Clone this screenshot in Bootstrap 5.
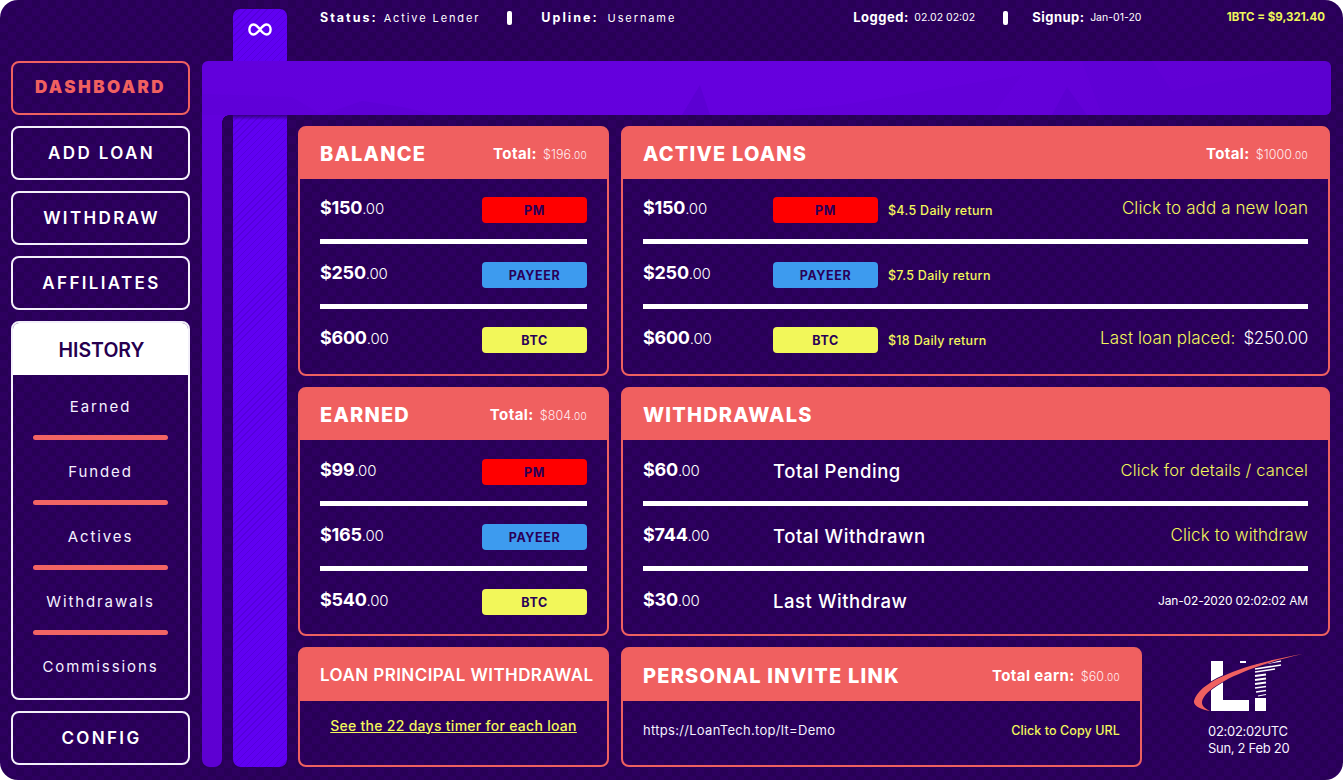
<!DOCTYPE html>
<html lang="en">
<head>
<meta charset="utf-8">
<title>LoanTech Dashboard</title>
<link rel="stylesheet" href="https://cdn.jsdelivr.net/npm/bootstrap@5.3.0/dist/css/bootstrap.min.css">
<style>
html,body{margin:0;background:#fff;overflow:hidden}
body{font-family:Inter,"Noto Sans",sans-serif;color:#fff}
.lt-shell{width:1343px;height:780px;border-radius:18px;overflow:hidden;display:grid;grid-template-columns:179px 1129px;column-gap:12px;grid-template-rows:61px 706px;padding-left:11px;
 background:conic-gradient(#2d005f 25%,#280056 0 50%,#2d005f 0 75%,#280056 0) 0 0/16px 16px}
/* header */
.lt-top{grid-column:2;grid-row:1;display:flex;padding-left:31px;position:relative}
.lt-tab{width:54px;height:52px;margin-top:9px;border-radius:7px 7px 0 0;flex:none;display:flex;justify-content:center;padding-top:14px}
.lt-tab svg{width:24px;height:13px;display:block}
.lt-stripe{background:repeating-linear-gradient(135deg,#6000f2 0 4px,#5600dc 4px 5px)}
.lt-info{display:flex;align-items:center;height:18px;margin-top:9px;font-size:11px;white-space:nowrap}
.lt-sp b{font-size:12.5px;font-weight:700;letter-spacing:2px;margin-right:6px}
.lt-sp span{letter-spacing:1.9px}
.lt-wide b{margin-right:9px}
.lt-tight b{font-size:13px;font-weight:700;margin-right:5.5px;letter-spacing:.5px}
.lt-tight span{font-size:10.5px}
.lt-pill{width:5px;height:14px;background:#fff;border-radius:2px;flex:none}
.lt-rate{font-size:11.5px;font-weight:700;color:#eef75a}
.lt-gap-a{margin-left:33px}.lt-gap-b{margin-left:27px}.lt-gap-c{margin-left:29px}.lt-gap-d{margin-left:177px}.lt-gap-e{margin-left:28px}.lt-gap-f{margin-left:24px}
.lt-gap-g{margin-left:auto;margin-right:6px}
/* sidebar */
.lt-side{grid-column:1;grid-row:2;display:flex;flex-direction:column;gap:11px}
.lt-nav{height:54px;border:2.5px solid #f3f0fa;border-radius:8px;color:#fff;font-size:17px;font-weight:600;letter-spacing:2.35px;display:flex;align-items:center;justify-content:center;padding:2px 0 0 2px}
.lt-nav:hover{color:#fff;border-color:#fff}
.lt-nav.lt-on,.lt-nav.lt-on:hover{border-color:#f06060;color:#f06060;font-weight:900;letter-spacing:2.4px;padding:0 0 1px}
.lt-hist{height:379px;border:2.5px solid #f3f0fa;border-radius:8px;background:transparent;overflow:hidden}
.lt-hist-head{height:52px;padding:3px 0 0 2px;background:#fff;color:#27004f;font-size:19.5px;font-weight:600;display:flex;align-items:center;justify-content:center}
.lt-hist-item{height:60px;display:flex;align-items:center;justify-content:center;color:#f4f0ff;font-size:15px;letter-spacing:1.9px;padding-top:4px}
.lt-hist-rule{height:5px;margin:0 20px;background:#f26464;border-radius:3px}
/* stage */
.lt-stage{grid-column:2;grid-row:2;display:grid;grid-template-columns:20px 1fr;grid-template-rows:54px 1fr}
.lt-bar{grid-column:1/-1;grid-row:1;border-radius:6px 6px 6px 0;background:linear-gradient(90deg,#6200dc 0,#6600de 60%,#5e00d0 100%);position:relative;overflow:hidden;z-index:1}
.lt-bar svg{position:absolute;inset:0;width:100%;height:100%}
.lt-rail{grid-column:1;grid-row:2;background:linear-gradient(180deg,#6200dc,#5e00d2);border-radius:0 0 8px 8px;position:relative}
.lt-rail::after{content:"";position:absolute;left:100%;top:0;width:7px;height:7px;background:radial-gradient(circle at 100% 100%,transparent 6.5px,#6200dc 7px)}
.lt-main{grid-column:2;grid-row:2;display:flex;padding-left:11px;gap:11px}
.lt-strip{width:54px;flex:none;border-radius:0 0 8px 8px;position:relative}
.lt-strip::before{content:"";position:absolute;left:0;right:0;top:0;height:5px;background:linear-gradient(180deg,rgba(40,0,90,.75),rgba(40,0,90,0))}
.lt-grid{display:grid;grid-template-columns:311px 709px;column-gap:12px;row-gap:11px;grid-template-rows:250px 249px 120px;padding-top:11px;height:100%}
.lt-card.card{background:transparent;border:2.5px solid #ee6060;border-radius:8px;color:#fff;--bs-card-inner-border-radius:5px}
.lt-card .card-header{box-sizing:content-box;height:48.5px;padding:3px 20px 0;margin-top:-1px;background:#f06060;border:0;display:flex;align-items:center;justify-content:space-between;white-space:nowrap}
.lt-third .card-header{height:49.5px}
.lt-title{font-size:20px;font-weight:800;letter-spacing:1.2px;color:#fff}
.lt-title-thin{font-size:17px;font-weight:600;letter-spacing:.44px;color:#fff}
.lt-total{font-size:15px;font-weight:700;display:flex;align-items:baseline;gap:6px;letter-spacing:.4px}
.lt-total span{font-size:12.5px;font-weight:300;color:#ffeef0;letter-spacing:.1px}
.lt-total em{font-style:normal;font-size:10px;font-weight:300;letter-spacing:.3px}
.lt-card .card-body{padding:0 20px;display:flex;flex-direction:column}
.lt-second .card-body{padding-top:1px}
.lt-line{height:60px;display:flex;align-items:center;flex:none;white-space:nowrap}
.lt-rule{height:5px;background:#fff;flex:none}
.lt-amt{font-size:18px;font-weight:700;letter-spacing:-.25px;margin-top:-2px;width:130px;flex:none}
.lt-amt span{font-size:15px;font-weight:300;letter-spacing:-.2px}
.lt-chip{width:105px;height:26px;border-radius:4px;flex:none;margin-top:2px;color:#2a0058;font-size:12.5px;font-weight:700;letter-spacing:.6px;display:flex;align-items:center;justify-content:center;padding:4px 0 0}
.lt-chip:hover{color:#2a0058}
.lt-pm,.lt-pm:hover{background:#ff0000}.lt-pay,.lt-pay:hover{background:#3d9bef}.lt-btc,.lt-btc:hover{background:#f2f75a}
.lt-daily{font-size:12.5px;font-weight:500;color:#f2f75a;margin-left:10px;letter-spacing:.3px;margin-top:6px}
.lt-yel{font-size:17px;font-weight:300;color:#f2f75a;letter-spacing:.1px;margin-left:auto;margin-top:1px}
.lt-yel-tight{font-size:16.5px;letter-spacing:.15px;margin-top:-1px}
.lt-yel em{font-style:normal;color:#fff;margin-left:3px;letter-spacing:-.3px}
.lt-lab{font-size:18.5px;font-weight:500;letter-spacing:.55px;margin-top:2px}
.lt-stamp{font-size:12px;margin-left:auto;letter-spacing:-.15px}
.lt-bl{grid-column:2;display:flex}
.lt-invite{width:521px;flex:none}
.lt-link{display:block;text-align:center;color:#f2f75a;font-size:14px;font-weight:500;text-decoration:underline;margin-top:14px;letter-spacing:.28px}
.lt-link:hover{color:#f2f75a}
.lt-url{font-size:13px;letter-spacing:.3px;color:#f4f0ff;margin-top:1px}
.lt-copy{font-size:12.5px;font-weight:500;color:#f2f75a;margin-left:auto;letter-spacing:.1px;margin-top:1px}
.lt-brand{flex:1;display:flex;flex-direction:column;align-items:flex-start;padding-top:6px}
.lt-brand svg{width:116px;height:60px;display:block;margin-left:48px;flex:none}
.lt-time{font-size:13px;line-height:17px;margin-top:10px;margin-left:66px;letter-spacing:-.3px;color:#f7f3ff}
</style>
</head>
<body>
<div class="lt-shell">
  <header class="lt-top">
    <div class="lt-tab lt-stripe"><svg viewBox="0 0 24 13" role="img" aria-label="infinity"><path d="M12 6.5C9.5 3.3 7.6 1.5 5.4 1.5 3 1.5 1.4 3.7 1.4 6.5S3 11.5 5.4 11.5C7.6 11.5 9.5 9.7 12 6.5 14.5 3.3 16.4 1.5 18.6 1.5 21 1.5 22.6 3.7 22.6 6.5S21 11.5 18.6 11.5C16.4 11.5 14.5 9.7 12 6.5Z" fill="none" stroke="#fff" stroke-width="2.4"/></svg></div>
    <div class="lt-info lt-sp lt-gap-a"><b>Status:</b><span>Active Lender</span></div>
    <div class="lt-info lt-gap-b"><i class="lt-pill"></i></div>
    <div class="lt-info lt-sp lt-wide lt-gap-c"><b>Upline:</b><span>Username</span></div>
    <div class="lt-info lt-tight lt-gap-d"><b>Logged:</b><span>02.02 02:02</span></div>
    <div class="lt-info lt-gap-e"><i class="lt-pill"></i></div>
    <div class="lt-info lt-tight lt-gap-f"><b>Signup:</b><span>Jan-01-20</span></div>
    <div class="lt-info lt-rate lt-gap-g">1BTC = $9,321.40</div>
  </header>

  <aside class="lt-side">
    <a class="btn lt-nav lt-on" href="#">DASHBOARD</a>
    <a class="btn lt-nav" href="#">ADD LOAN</a>
    <a class="btn lt-nav" href="#">WITHDRAW</a>
    <a class="btn lt-nav" href="#">AFFILIATES</a>
    <div class="lt-hist">
      <div class="lt-hist-head">HISTORY</div>
      <div class="lt-hist-item">Earned</div><div class="lt-hist-rule"></div>
      <div class="lt-hist-item">Funded</div><div class="lt-hist-rule"></div>
      <div class="lt-hist-item">Actives</div><div class="lt-hist-rule"></div>
      <div class="lt-hist-item">Withdrawals</div><div class="lt-hist-rule"></div>
      <div class="lt-hist-item">Commissions</div>
    </div>
    <a class="btn lt-nav" href="#">CONFIG</a>
  </aside>

  <main class="lt-stage">
    <div class="lt-bar">
      <svg viewBox="0 0 1129 54" preserveAspectRatio="none" aria-hidden="true">
        <g fill="#5a00cf">
          <polygon points="498,24 480,54 508,54" opacity=".8"/>
          <polygon points="865,26 850,54 885,54" opacity=".8"/>
          <polygon points="160,40 120,54 235,54 200,46" opacity=".5"/>
          <polygon points="0,33 90,36 120,54 0,54" opacity=".3"/>
          <polygon points="530,54 640,44 820,14 790,54" opacity=".25"/>
          <polygon points="880,0 950,0 970,30 1129,0 1129,54 900,54" opacity=".3"/>
        </g>
      </svg>
    </div>
    <div class="lt-rail"></div>
    <div class="lt-main">
      <div class="lt-strip lt-stripe"></div>
      <div class="lt-grid">

        <section class="card lt-card">
          <div class="card-header"><span class="lt-title">BALANCE</span><span class="lt-total">Total: <span>$196<em>.00</em></span></span></div>
          <div class="card-body">
            <div class="lt-line"><span class="lt-amt">$150<span>.00</span></span><span class="btn lt-chip lt-pm ms-auto">PM</span></div>
            <div class="lt-rule"></div>
            <div class="lt-line"><span class="lt-amt">$250<span>.00</span></span><span class="btn lt-chip lt-pay ms-auto">PAYEER</span></div>
            <div class="lt-rule"></div>
            <div class="lt-line"><span class="lt-amt">$600<span>.00</span></span><span class="btn lt-chip lt-btc ms-auto">BTC</span></div>
          </div>
        </section>

        <section class="card lt-card">
          <div class="card-header"><span class="lt-title">ACTIVE LOANS</span><span class="lt-total">Total: <span>$1000<em>.00</em></span></span></div>
          <div class="card-body">
            <div class="lt-line"><span class="lt-amt">$150<span>.00</span></span><span class="btn lt-chip lt-pm">PM</span><span class="lt-daily">$4.5 Daily return</span><span class="lt-yel">Click to add a new loan</span></div>
            <div class="lt-rule"></div>
            <div class="lt-line"><span class="lt-amt">$250<span>.00</span></span><span class="btn lt-chip lt-pay">PAYEER</span><span class="lt-daily">$7.5 Daily return</span></div>
            <div class="lt-rule"></div>
            <div class="lt-line"><span class="lt-amt">$600<span>.00</span></span><span class="btn lt-chip lt-btc">BTC</span><span class="lt-daily">$18 Daily return</span><span class="lt-yel">Last loan placed: <em>$250.00</em></span></div>
          </div>
        </section>

        <section class="card lt-card lt-second">
          <div class="card-header"><span class="lt-title">EARNED</span><span class="lt-total">Total: <span>$804<em>.00</em></span></span></div>
          <div class="card-body">
            <div class="lt-line"><span class="lt-amt">$99<span>.00</span></span><span class="btn lt-chip lt-pm ms-auto">PM</span></div>
            <div class="lt-rule"></div>
            <div class="lt-line"><span class="lt-amt">$165<span>.00</span></span><span class="btn lt-chip lt-pay ms-auto">PAYEER</span></div>
            <div class="lt-rule"></div>
            <div class="lt-line"><span class="lt-amt">$540<span>.00</span></span><span class="btn lt-chip lt-btc ms-auto">BTC</span></div>
          </div>
        </section>

        <section class="card lt-card lt-second">
          <div class="card-header"><span class="lt-title">WITHDRAWALS</span></div>
          <div class="card-body">
            <div class="lt-line"><span class="lt-amt">$60<span>.00</span></span><span class="lt-lab">Total Pending</span><span class="lt-yel lt-yel-tight">Click for details / cancel</span></div>
            <div class="lt-rule"></div>
            <div class="lt-line"><span class="lt-amt">$744<span>.00</span></span><span class="lt-lab">Total Withdrawn</span><span class="lt-yel">Click to withdraw</span></div>
            <div class="lt-rule"></div>
            <div class="lt-line"><span class="lt-amt">$30<span>.00</span></span><span class="lt-lab">Last Withdraw</span><span class="lt-stamp">Jan-02-2020 02:02:02 AM</span></div>
          </div>
        </section>

        <section class="card lt-card lt-third">
          <div class="card-header"><span class="lt-title-thin">LOAN PRINCIPAL WITHDRAWAL</span></div>
          <div class="card-body"><a class="lt-link" href="#">See the 22 days timer for each loan</a></div>
        </section>

        <div class="lt-bl">
          <section class="card lt-card lt-third lt-invite">
            <div class="card-header"><span class="lt-title">PERSONAL INVITE LINK</span><span class="lt-total">Total earn: <span>$60<em>.00</em></span></span></div>
            <div class="card-body"><div class="lt-line"><span class="lt-url">https://LoanTech.top/lt=Demo</span><span class="lt-copy">Click to Copy URL</span></div></div>
          </section>
          <div class="lt-brand">
            <svg viewBox="0 0 116 60" aria-label="LT logo" role="img">
              <polygon fill="#fff" points="21,8 33,8 33,47 59,47 59,58 21,58"/>
              <rect x="50" y="8" width="6" height="2" fill="#fff"/>
              <polygon fill="#fff" points="65,45 76,45 76,58 65,58"/>
              <g stroke="#fff" fill="none">
                <path d="M65 12 91 8" stroke-width="1.6"/><path d="M65 16 91 12" stroke-width="1.6"/><path d="M65 19 85 16" stroke-width="1.6"/>
                <path d="M65 23 76 21.5" stroke-width="2"/><path d="M65 27 76 25.5" stroke-width="2"/><path d="M65 31 76 29.5" stroke-width="1.8"/>
                <path d="M65 35 76 33.5" stroke-width="1.6"/><path d="M66 39 76 37.5" stroke-width="1.4"/><path d="M68 43 76 41.5" stroke-width="1.2"/>
              </g>
              <path d="M113 1C70 8 10 24 4 48 3 53 12 57 20 58 12 54 10 50 14 44 24 28 70 10 113 1Z" fill="#f06060" stroke="#2a0058" stroke-width="1.5" paint-order="stroke"/>
            </svg>
            <div class="lt-time">02:02:02UTC<br>Sun, 2 Feb 20</div>
          </div>
        </div>

      </div>
    </div>
  </main>
</div>
<script src="https://cdn.jsdelivr.net/npm/bootstrap@5.3.0/dist/js/bootstrap.bundle.min.js"></script>
</body>
</html>
